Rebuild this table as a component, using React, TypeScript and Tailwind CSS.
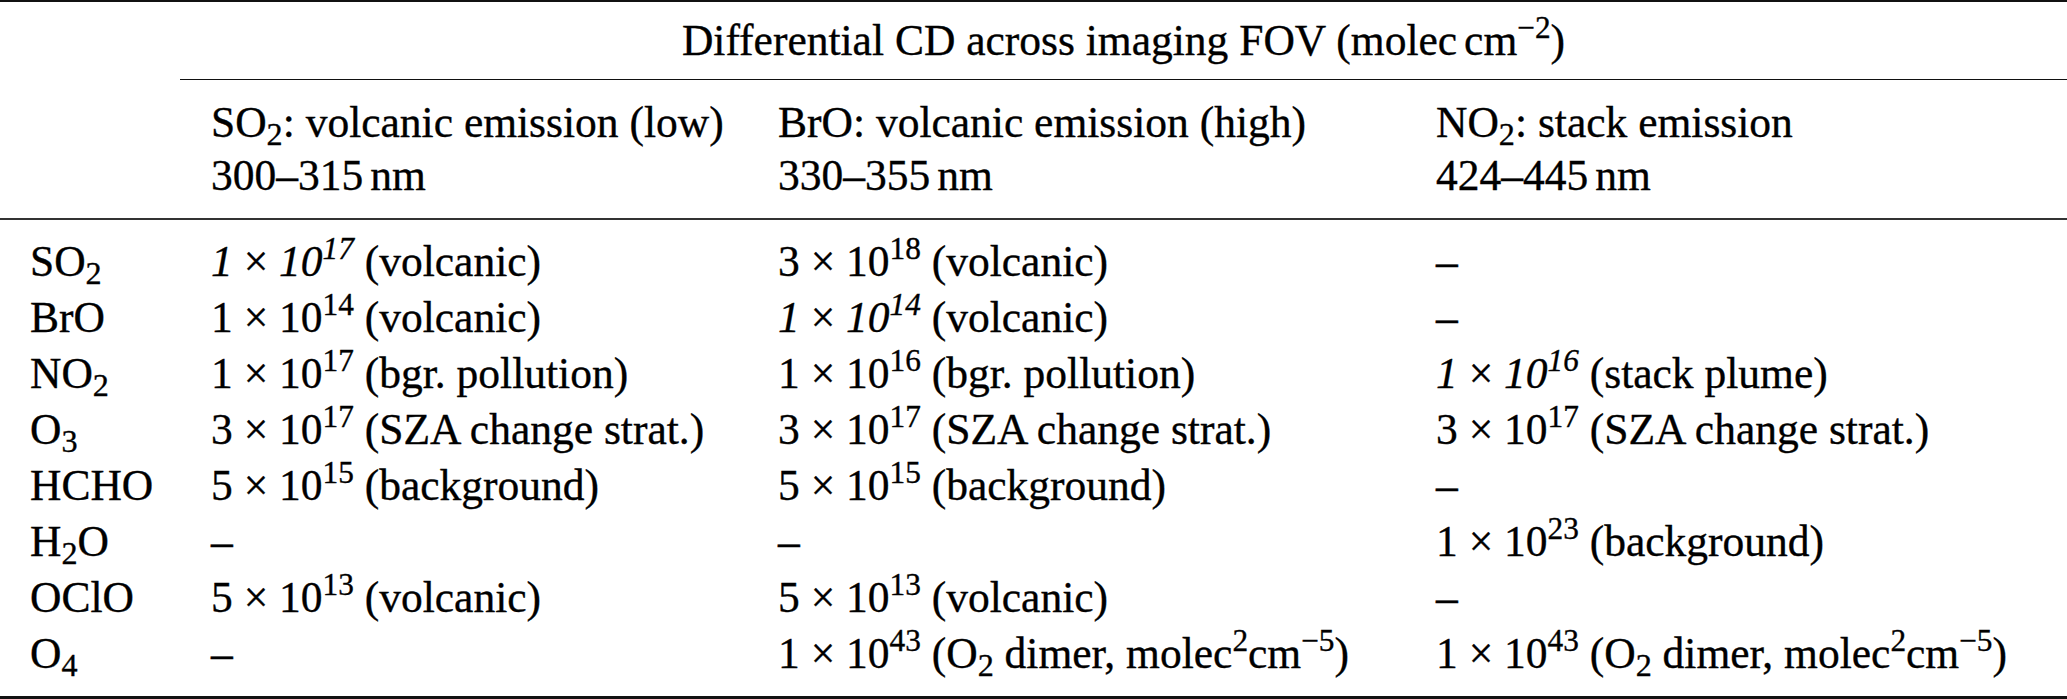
import React from "react";

const Sup = ({ children }: { children: React.ReactNode }) => (
  <span className="relative top-[-0.53em] text-[72%] leading-none">{children}</span>
);
const Sub = ({ children }: { children: React.ReactNode }) => (
  <span className="relative top-[0.26em] text-[74%] leading-none">{children}</span>
);

const Val = ({ m, e, note, it }: { m: string; e: string; note: React.ReactNode; it?: boolean }) => (
  <span className="whitespace-nowrap">
    <span className={it ? "italic" : ""}>{m}</span> × <span className={it ? "italic" : ""}>10<Sup>{e}</Sup></span> {note}
  </span>
);

const Dash = () => <span>–</span>;

const O2Note = () => (
  <span>
    (O<Sub>2</Sub> dimer, molec<Sup>2</Sup>cm<Sup>−5</Sup>)
  </span>
);

const rows: { label: React.ReactNode; c: React.ReactNode[] }[] = [
  {
    label: <span>SO<Sub>2</Sub></span>,
    c: [<Val m="1" e="17" note="(volcanic)" it />, <Val m="3" e="18" note="(volcanic)" />, <Dash />],
  },
  {
    label: <span>BrO</span>,
    c: [<Val m="1" e="14" note="(volcanic)" />, <Val m="1" e="14" note="(volcanic)" it />, <Dash />],
  },
  {
    label: <span>NO<Sub>2</Sub></span>,
    c: [
      <Val m="1" e="17" note="(bgr. pollution)" />,
      <Val m="1" e="16" note="(bgr. pollution)" />,
      <Val m="1" e="16" note="(stack plume)" it />,
    ],
  },
  {
    label: <span>O<Sub>3</Sub></span>,
    c: [
      <Val m="3" e="17" note="(SZA change strat.)" />,
      <Val m="3" e="17" note="(SZA change strat.)" />,
      <Val m="3" e="17" note="(SZA change strat.)" />,
    ],
  },
  {
    label: <span>HCHO</span>,
    c: [<Val m="5" e="15" note="(background)" />, <Val m="5" e="15" note="(background)" />, <Dash />],
  },
  {
    label: <span>H<Sub>2</Sub>O</span>,
    c: [<Dash />, <Dash />, <Val m="1" e="23" note="(background)" />],
  },
  {
    label: <span>OClO</span>,
    c: [<Val m="5" e="13" note="(volcanic)" />, <Val m="5" e="13" note="(volcanic)" />, <Dash />],
  },
  {
    label: <span>O<Sub>4</Sub></span>,
    c: [<Dash />, <Val m="1" e="43" note={<O2Note />} />, <Val m="1" e="43" note={<O2Note />} />],
  },
];

export default function App() {
  return (
    <div className="w-[2067px] h-[699px] bg-white text-black font-['Liberation_Serif','Times_New_Roman',serif] text-[43.5px] [-webkit-text-stroke:0.35px_#000] overflow-hidden">
      <div className="h-[2px] bg-[#111]" />
      <div className="grid grid-cols-[180px_1fr] py-[12px]">
        <div />
        <div className="text-center leading-[53px] whitespace-nowrap">
          Differential CD across imaging FOV (molec<span className="ml-[7px]">cm</span>
          <Sup>−2</Sup>)
        </div>
      </div>
      <div className="grid grid-cols-[180px_1fr]">
        <div />
        <div className="h-[1px] bg-[#111]" />
      </div>
      <div className="grid grid-cols-[180px_567px_658px_1fr] pt-[16px] pb-[16px] leading-[53px]">
        <div />
        <div className="pl-[31px] whitespace-nowrap">
          <div>
            SO<Sub>2</Sub>: volcanic emission (low)
          </div>
          <div>
            300–315<span className="ml-[7px]">nm</span>
          </div>
        </div>
        <div className="pl-[31px] whitespace-nowrap">
          <div>BrO: volcanic emission (high)</div>
          <div>
            330–355<span className="ml-[7px]">nm</span>
          </div>
        </div>
        <div className="pl-[31px] whitespace-nowrap">
          <div>
            NO<Sub>2</Sub>: stack emission
          </div>
          <div>
            424–445<span className="ml-[7px]">nm</span>
          </div>
        </div>
      </div>
      <div className="h-[2px] bg-[#333]" />
      <div className="grid grid-cols-[180px_567px_658px_1fr] pt-[12.5px] pb-[15.5px] leading-[56px]">
        {rows.map((r, i) => (
          <React.Fragment key={i}>
            <div className="pl-[30px] whitespace-nowrap">{r.label}</div>
            {r.c.map((c, j) => (
              <div key={j} className="pl-[31px] whitespace-nowrap">
                {c}
              </div>
            ))}
          </React.Fragment>
        ))}
      </div>
      <div className="h-[3px] bg-[#111]" />
    </div>
  );
}
